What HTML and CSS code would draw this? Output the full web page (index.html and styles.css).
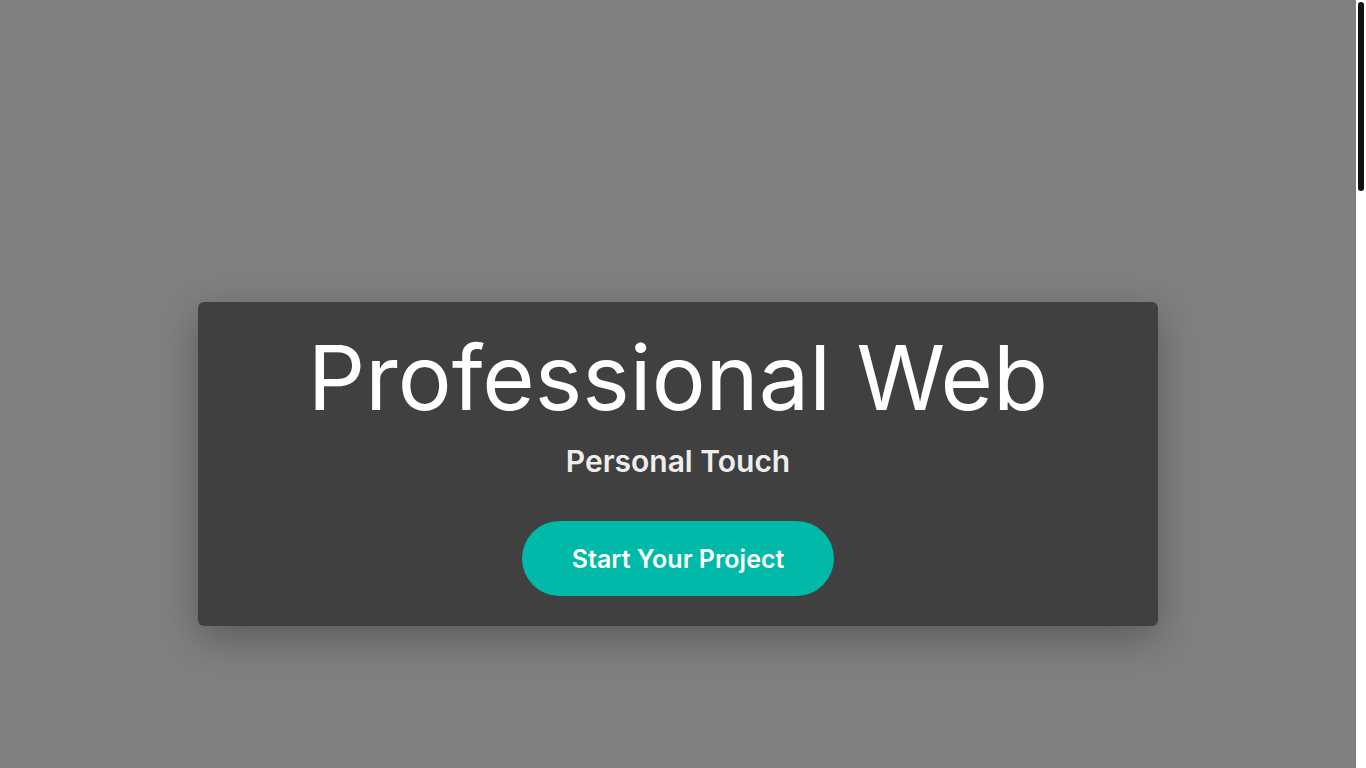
FILE: index.html
```html
<!DOCTYPE html>
<html lang="en">
<head>
<meta charset="utf-8">
<title>Professional Web</title>
<link rel="stylesheet" href="styles.css">
</head>
<body>
<div class="viewport">
  <main class="page">
    <section class="hero">
      <div class="card">
        <h1 class="title">Professional Web</h1>
        <p class="subtitle">Personal Touch</p>
        <a class="cta" href="#">Start Your Project</a>
      </div>
    </section>
  </main>
  <div class="scrollbar" aria-hidden="true">
    <div class="thumb"></div>
  </div>
</div>
</body>
</html>
```

FILE: styles.css
```css
html,
body {
  margin: 0;
  background: #808080;
}
body {
  font-family: Inter, "Noto Sans", sans-serif;
  color: #ffffff;
}
.viewport {
  display: flex;
  height: 768px;
  overflow: hidden;
}
.page {
  flex: 1 1 auto;
  display: flex;
  flex-direction: column;
}
.scrollbar {
  flex: 0 0 10px;
  box-sizing: border-box;
  background: #ffffff;
  padding: 2px;
}
.thumb {
  height: 189px;
  background: #111111;
  border-radius: 3px;
}
.hero {
  height: 768px;
  box-sizing: border-box;
  padding-top: 160px;
  display: flex;
  align-items: center;
  justify-content: center;
}
.card {
  width: 960px;
  height: 324px;
  box-sizing: border-box;
  background: #404040;
  border-radius: 6px;
  box-shadow: 0 12px 40px rgba(0, 0, 0, 0.3);
  display: flex;
  flex-direction: column;
  align-items: center;
  padding-top: 21px;
}
.title {
  margin: 0;
  font-size: 90px;
  font-weight: 400;
  line-height: 109px;
  color: #ffffff;
}
.subtitle {
  margin: 11px 0 0;
  font-size: 30px;
  font-weight: 600;
  line-height: 36px;
  color: #eeeeee;
}
.cta {
  margin-top: 42px;
  width: 312px;
  height: 75px;
  box-sizing: border-box;
  display: flex;
  align-items: center;
  justify-content: center;
  border-radius: 38px;
  background: #00b9a8;
  color: #ffffff;
  font-size: 25px;
  font-weight: 600;
  text-decoration: none;
}
```
